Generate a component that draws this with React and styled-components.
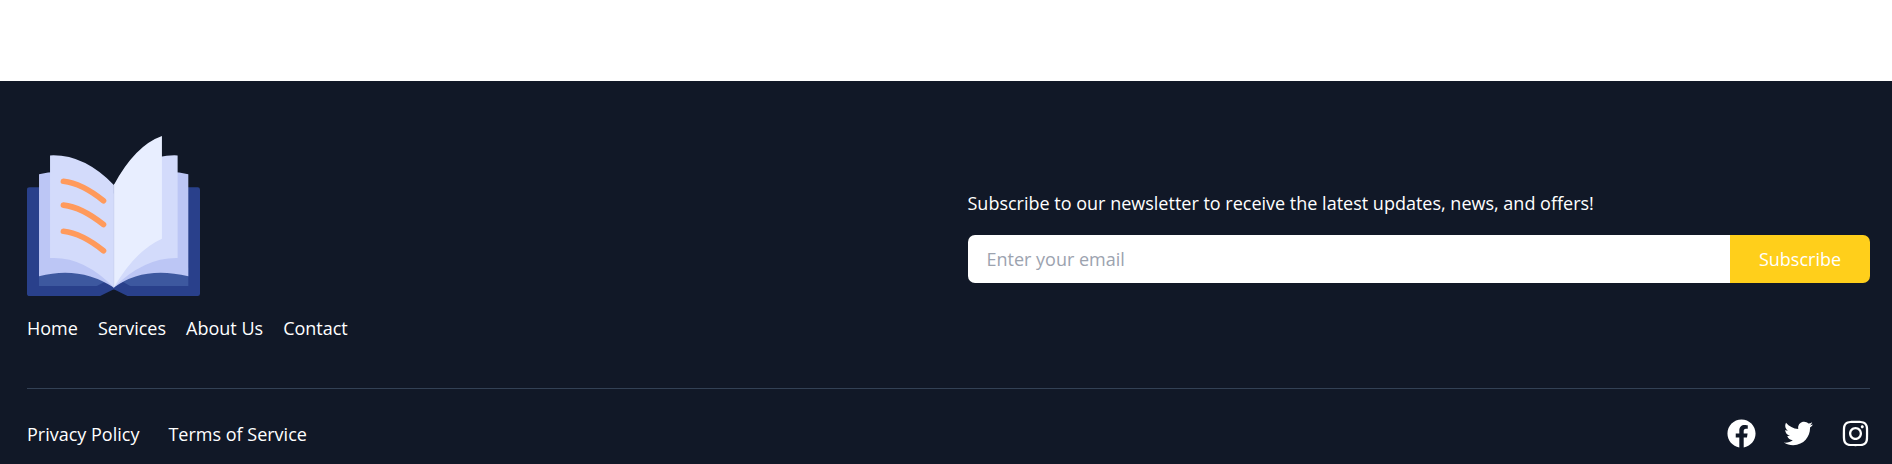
import React from "react";
import styled, { createGlobalStyle } from "styled-components";
import { FaFacebook, FaTwitter, FaInstagram } from "react-icons/fa";

const GlobalStyle = createGlobalStyle`
  *, *::before, *::after { box-sizing: border-box; }
  body {
    margin: 0;
    background: #ffffff;
    color: #ffffff;
    font-family: "Segoe UI", "Open Sans", "Noto Sans", sans-serif;
    font-size: 18px;
    line-height: 28px;
  }
`;

const Page = styled.div`
  padding-top: 81px;
`;

const Footer = styled.footer`
  background: #111827;
  padding: 55px 22px 17px 27px;
`;

const Top = styled.div`
  display: grid;
  grid-template-columns: 1fr 1fr;
  gap: 38px;
  align-items: center;
  padding-bottom: 46px;
  border-bottom: 1px solid #334155;
`;

const Brand = styled.div`
  display: flex;
  flex-direction: column;
  gap: 18px;
`;

const Logo = styled.svg`
  display: block;
  width: 173px;
  height: 160px;
`;

const LinkRow = styled.nav`
  display: flex;
  gap: ${({ $gap }) => $gap}px;
`;

const TextLink = styled.a`
  color: inherit;
  text-decoration: none;
`;

const Newsletter = styled.form`
  display: flex;
  flex-direction: column;
  gap: 18px;
  padding-bottom: 6px;
`;

const Field = styled.div`
  display: flex;
  height: 48px;
`;

const EmailInput = styled.input`
  flex: 1;
  min-width: 0;
  padding: 0 19px;
  border: 0;
  border-radius: 7px 0 0 7px;
  background: #ffffff;
  color: #111827;
  font: inherit;
  &::placeholder { color: #9ca3af; opacity: 1; }
`;

const SubmitButton = styled.button`
  width: 140px;
  padding: 0;
  border: 0;
  border-radius: 0 7px 7px 0;
  background: #ffcf1b;
  color: #ffffff;
  font: inherit;
`;

const Bottom = styled.div`
  display: flex;
  justify-content: space-between;
  align-items: center;
  padding-top: 30px;
`;

const Socials = styled.div`
  display: flex;
  gap: 28px;
`;

const SocialLink = styled.a`
  display: block;
  color: inherit;
  svg { display: block; width: 29px; height: 29px; }
`;

const BookLogo = () => (
  <Logo viewBox="81 48 518 477" preserveAspectRatio="none" role="img" aria-label="Open book">
    <path fill="#29408b" d="M89 201H592Q599 201 599 208V518Q599 525 592 525H382L341 505L300 525H89Q81 525 81 518V208Q81 201 89 201Z" />
    <path fill="#3d589f" d="M117 440H564V495H388L341 499L291 495H117Z" />
    <path fill="#29408b" d="M290 495L316 482L341 500L366 482L390 495L370 505H310Z" />
    <path fill="#bcc6f5" d="M117 162Q230 135 341 220Q450 135 564 162V466Q430 434 341 500Q240 434 117 466Z" />
    <path fill="#d3dbfb" d="M150 106Q250 101 341 194V500Q250 406 150 412Z" />
    <path fill="#d3dbfb" d="M341 194Q435 101 532 106V412Q432 410 341 500Z" />
    <path fill="#e8eeff" d="M341 194Q405 76 485 48V354Q405 390 341 500Z" />
    <path d="M341 194V500" stroke="#c8d1ef" strokeWidth="2" />
    <g fill="none" stroke="#ff9a5c" strokeWidth="17" strokeLinecap="round">
      <path d="M190 183Q245 189 310 241" />
      <path d="M190 254Q245 260 310 312" />
      <path d="M190 332Q245 338 310 390" />
    </g>
  </Logo>
);

export default function App() {
  return (
    <Page>
      <GlobalStyle />
      <Footer>
        <Top>
          <Brand>
            <BookLogo />
            <LinkRow $gap={20} aria-label="Main">
              <TextLink href="#home">Home</TextLink>
              <TextLink href="#services">Services</TextLink>
              <TextLink href="#about">About Us</TextLink>
              <TextLink href="#contact">Contact</TextLink>
            </LinkRow>
          </Brand>
          <Newsletter onSubmit={(e) => e.preventDefault()}>
            <label htmlFor="email">
              Subscribe to our newsletter to receive the latest updates, news, and offers!
            </label>
            <Field>
              <EmailInput id="email" type="email" placeholder="Enter your email" />
              <SubmitButton type="submit">Subscribe</SubmitButton>
            </Field>
          </Newsletter>
        </Top>
        <Bottom>
          <LinkRow $gap={29} aria-label="Legal">
            <TextLink href="#privacy">Privacy Policy</TextLink>
            <TextLink href="#terms">Terms of Service</TextLink>
          </LinkRow>
          <Socials>
            <SocialLink href="#facebook" aria-label="Facebook"><FaFacebook /></SocialLink>
            <SocialLink href="#twitter" aria-label="Twitter"><FaTwitter /></SocialLink>
            <SocialLink href="#instagram" aria-label="Instagram"><FaInstagram /></SocialLink>
          </Socials>
        </Bottom>
      </Footer>
    </Page>
  );
}
